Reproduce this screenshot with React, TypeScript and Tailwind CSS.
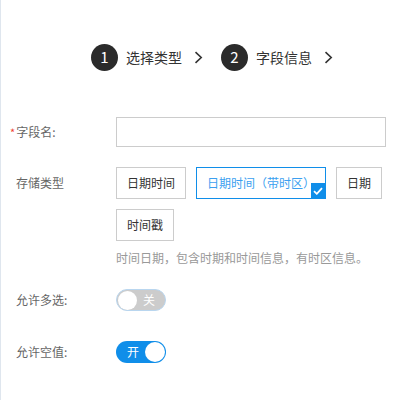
import React from 'react';

const font = { fontFamily: '"Noto Sans CJK SC", Roboto, "Noto Sans", sans-serif' };

function Step({ n, label }: { n: number; label: string }) {
  return (
    <div className="flex items-center">
      <div className="w-[27px] h-[27px] rounded-full bg-[#2b2b2b] text-white flex items-center justify-center text-[15px]">
        {n}
      </div>
      <span className="ml-[8px] text-[14px] text-[#333]">{label}</span>
      <svg className="ml-[12px]" width="9" height="13" viewBox="0 0 9 13" fill="none">
        <path d="M1.5 1.2L7.2 6.5L1.5 11.8" stroke="#333" strokeWidth="1.6" />
      </svg>
    </div>
  );
}

function TypeButton({ label, selected }: { label: string; selected?: boolean }) {
  return (
    <div
      className={
        selected
          ? 'relative h-[32px] px-[10px] flex items-center border border-[#108ee9] text-[#3c9ff0] text-[12px]'
          : 'relative h-[32px] px-[10px] flex items-center border border-[#ccc] text-[#333] text-[12px]'
      }
    >
      {label}
      {selected && (
        <div className="absolute right-0 bottom-0 w-[14px] h-[15px] bg-[#108ee9] flex items-center justify-center">
          <svg width="10" height="8" viewBox="0 0 10 8" fill="none">
            <path d="M1 4.2L3.8 6.8L9 1.2" stroke="white" strokeWidth="1.8" />
          </svg>
        </div>
      )}
    </div>
  );
}

function Toggle({ on, label }: { on: boolean; label: string }) {
  return (
    <div
      className={
        on
          ? 'w-[50px] h-[22px] rounded-full bg-[#108ee9] flex items-center justify-between pl-[11px] pr-[1px]'
          : 'w-[50px] h-[22px] rounded-full bg-[#ccc] flex items-center justify-between pl-[1px] pr-[10px] border border-[#b9d6ef]'
      }
    >
      {on ? (
        <>
          <span className="text-white text-[12px]">{label}</span>
          <div className="w-[20px] h-[20px] rounded-full bg-white" />
        </>
      ) : (
        <>
          <div className="w-[19px] h-[19px] rounded-full bg-white" />
          <span className="text-white text-[12px]">{label}</span>
        </>
      )}
    </div>
  );
}

export default function App() {
  return (
    <div style={font} className="w-[401px] h-[400px] bg-white border-l border-[#dfe6ee] overflow-hidden">
      {/* Steps */}
      <div className="flex items-center pl-[90px] pt-[44px] gap-[18px]">
        <Step n={1} label="选择类型" />
        <Step n={2} label="字段信息" />
      </div>

      {/* Form */}
      <div className="mt-[46px]">
        <div className="flex items-center">
          <div className="w-[115px] pl-[9px] text-[12px] text-[#666]">
            <span className="text-[#f04134] text-[11px] mr-[1px]">*</span>字段名:
          </div>
          <div className="w-[270px] h-[30px] border border-[#ccc]" />
        </div>

        <div className="flex mt-[20px]">
          <div className="w-[115px] pl-[15px] text-[12px] text-[#666] pt-[7px]">存储类型</div>
          <div className="w-[270px]">
            <div className="flex flex-wrap gap-[10px]">
              <TypeButton label="日期时间" />
              <TypeButton label="日期时间（带时区）" selected />
              <TypeButton label="日期" />
              <TypeButton label="时间戳" />
            </div>
            <div className="mt-[8px] text-[12px] text-[#999]">时间日期，包含时期和时间信息，有时区信息。</div>
          </div>
        </div>

        <div className="flex items-center mt-[22px]">
          <div className="w-[115px] pl-[15px] text-[12px] text-[#666]">允许多选:</div>
          <Toggle on={false} label="关" />
        </div>

        <div className="flex items-center mt-[30px]">
          <div className="w-[115px] pl-[15px] text-[12px] text-[#666]">允许空值:</div>
          <Toggle on label="开" />
        </div>
      </div>
    </div>
  );
}
